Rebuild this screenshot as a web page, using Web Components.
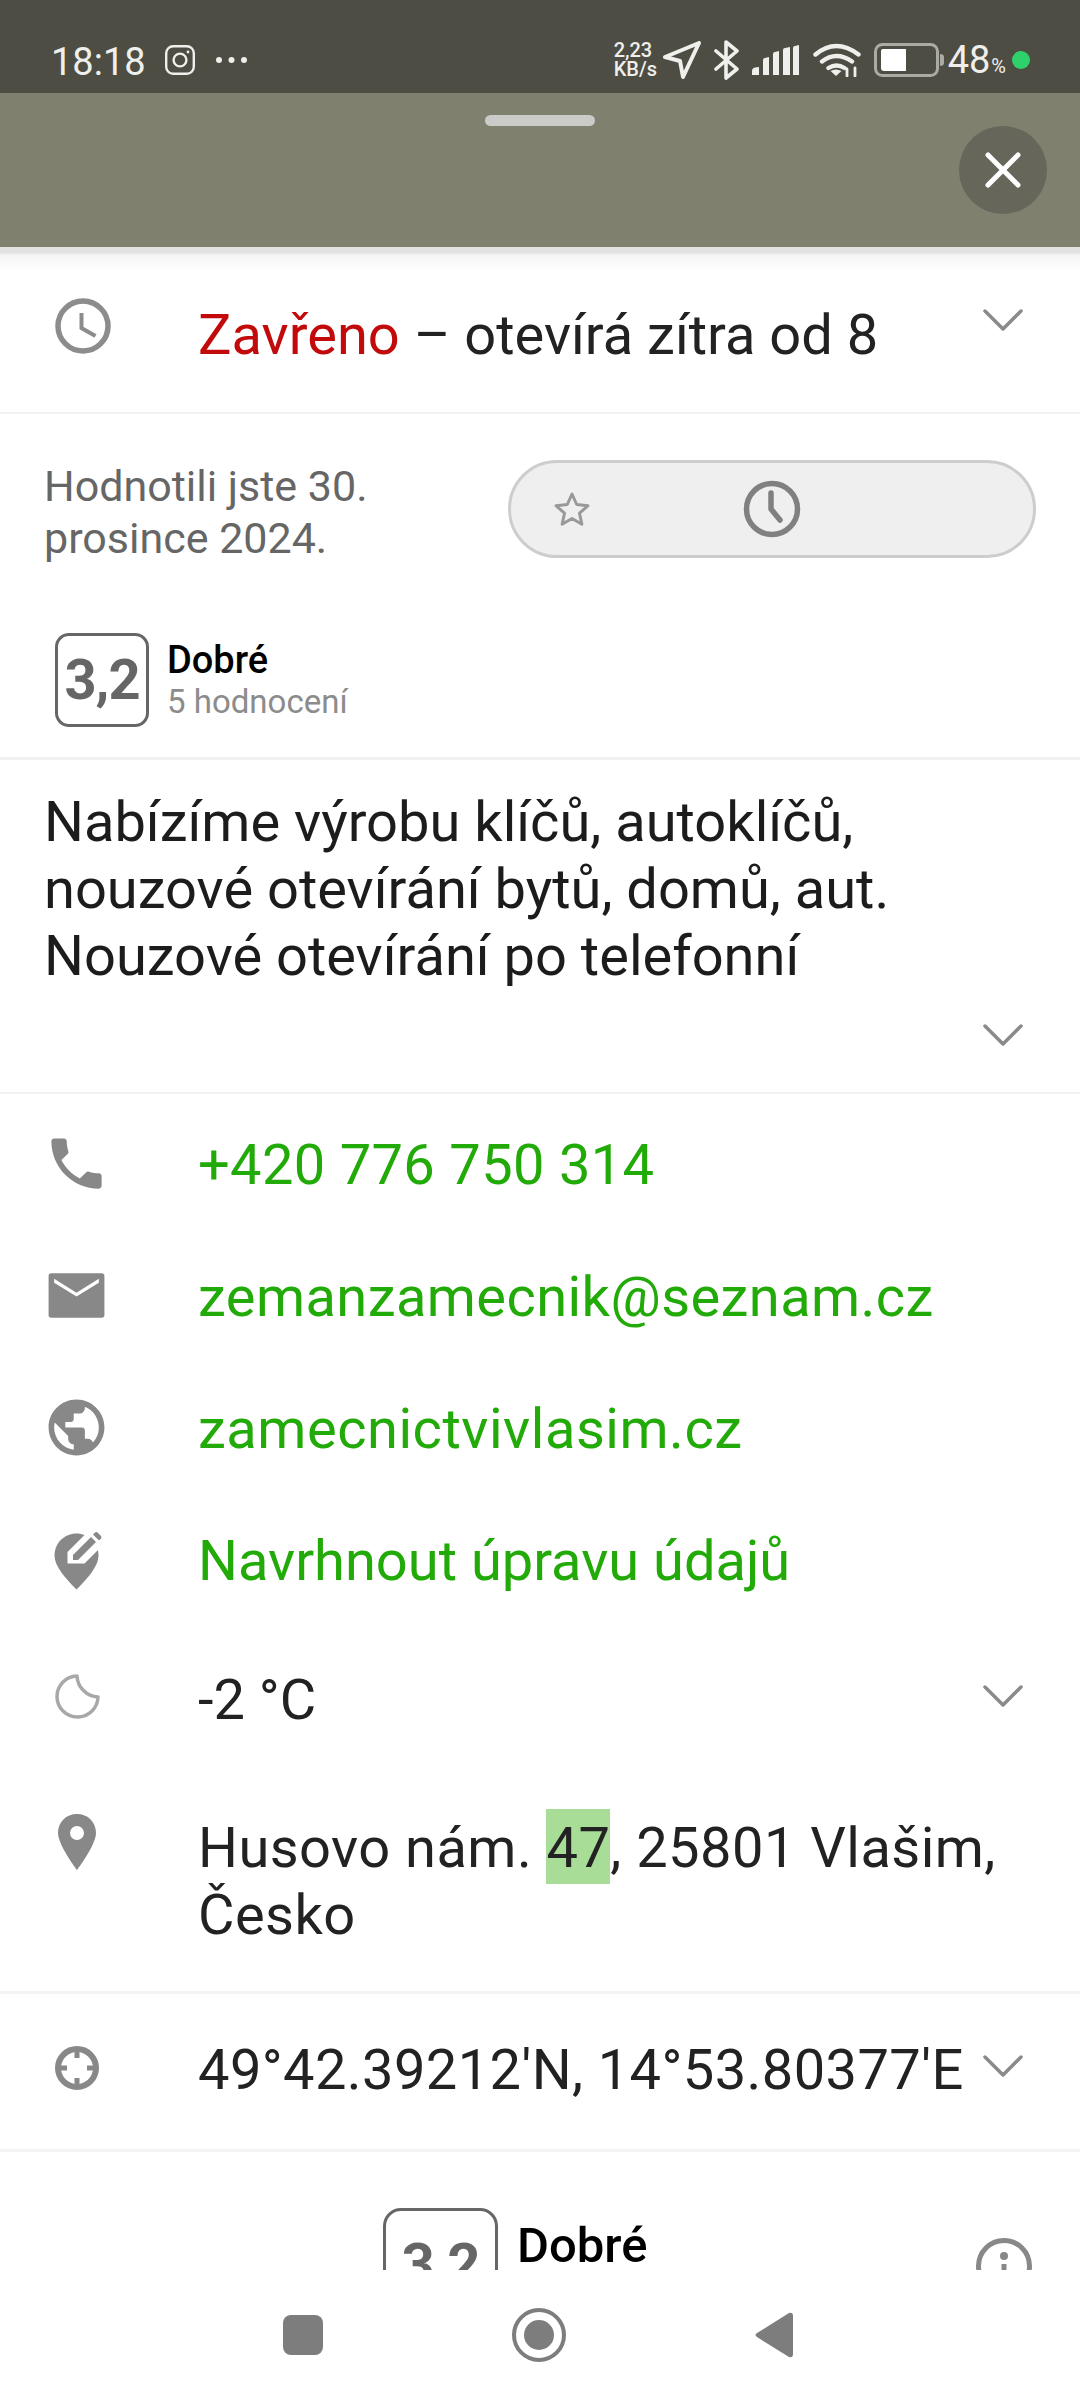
<!DOCTYPE html>
<html lang="cs">
<head>
<meta charset="utf-8">
<title>Detail místa</title>
<style>
  html, body { margin: 0; padding: 0; background: #fff; }
  body { width: 1080px; height: 2400px; overflow: hidden; font-family: Roboto, "Noto Sans", sans-serif; }
  place-screen { height: 2400px; }
</style>
</head>
<body>
<place-screen>
  <status-bar></status-bar>
  <sheet-header></sheet-header>
  <place-sheet>
    <opening-row></opening-row>
    <user-rating></user-rating>
    <rating-summary></rating-summary>
    <place-description>Nabízíme výrobu klíčů, autoklíčů, nouzové otevírání bytů, domů, aut. Nouzové otevírání po telefonní</place-description>
    <contact-list>
      <contact-row icon="phone" spacing=".33px">+420 776 750 314</contact-row>
      <contact-row icon="mail" spacing=".43px">zemanzamecnik@seznam.cz</contact-row>
      <contact-row icon="web" spacing=".53px">zamecnictvivlasim.cz</contact-row>
      <contact-row icon="edit" spacing="0">Navrhnout úpravu údajů</contact-row>
    </contact-list>
    <weather-row></weather-row>
    <address-row></address-row>
    <coords-row></coords-row>
    <rating-footer></rating-footer>
  </place-sheet>
  <nav-bar></nav-bar>
</place-screen>

<script>
const CHEVRON = `<svg width="40" height="24" viewBox="0 0 40 24"><path d="M2 3l18 18L38 3" fill="none" stroke="#8a8a8a" stroke-width="3.5" stroke-linecap="round" stroke-linejoin="round"/></svg>`;

const ICONS = {
  phone: `<svg width="67" height="67" viewBox="0 0 24 24"><path fill="#888" d="M6.62 10.79c1.44 2.83 3.76 5.14 6.59 6.59l2.2-2.2c.27-.27.67-.36 1.02-.24 1.12.37 2.33.57 3.57.57.55 0 1 .45 1 1V20c0 .55-.45 1-1 1-9.39 0-17-7.61-17-17 0-.55.45-1 1-1h3.5c.55 0 1 .45 1 1 0 1.25.2 2.45.57 3.57.11.35.03.74-.25 1.02l-2.2 2.2z"/></svg>`,
  mail: `<svg width="67" height="67" viewBox="0 0 24 24"><path fill="#888" fill-rule="evenodd" d="M3 4h18a1 1 0 0 1 1 1v14a1 1 0 0 1-1 1H3a1 1 0 0 1-1-1V5a1 1 0 0 1 1-1zM4 6v1.400l8 5 8-5V6l-8 5z"/></svg>`,
  web: `<svg width="67" height="67" viewBox="0 0 24 24"><path fill="#888" d="M12 2C6.48 2 2 6.48 2 12s4.48 10 10 10 10-4.48 10-10S17.52 2 12 2zm-1 17.93c-3.95-.49-7-3.85-7-7.93 0-.62.08-1.21.21-1.79L9 15v1c0 1.1.9 2 2 2v1.93zm6.9-2.54c-.26-.81-1-1.39-1.9-1.39h-1v-3c0-.55-.45-1-1-1H8v-2h2c.55 0 1-.45 1-1V7h2c1.1 0 2-.9 2-2v-.41c2.93 1.19 5 4.06 5 7.41 0 2.08-.8 3.97-2.1 5.39z"/></svg>`,
  edit: `<svg width="67" height="67" viewBox="0 0 67 67"><path fill="#888" d="M33.500 7.500C21.500 7.500 11.500 17 11.500 29.500 11.500 40 22 52 33.500 63.500 45 52 55.500 40 55.500 29.500 55.500 17 45.500 7.500 33.500 7.500z"/><path fill="#fff" d="M24.500 37.500V26L45 5.500 60 19 41.500 37.500z"/><path fill="#888" d="M30 34v-5l18-18 5 5-18 18z"/><path fill="#888" d="M50 8.500l2-2q1.300-1 2.600 0l3.400 3.400q1 1.300 0 2.600l-2 2z"/></svg>`
};

// status bar, with the phone's own icons
class StatusBar extends HTMLElement {
  constructor() {
    super();
    this.attachShadow({ mode: 'open' });
    this.shadowRoot.innerHTML = `
      <style>
        :host { display: flex; align-items: center; height: 93px; padding: 26px 0 0 51px; box-sizing: border-box; background: #4d4d43; color: #efefec; }
        .time { font-size: 38px; width: 114px; line-height: 1; padding-top: 5px; }
        svg { display: block; flex: none; }
        .dots { margin-left: 21px; }
        .right { margin-left: auto; display: flex; align-items: center; padding-right: 50px; }
        .speed { font-size: 20px; font-weight: 500; line-height: 19px; width: 49px; text-align: left; }
        .pct { font-size: 38px; margin-left: 3px; line-height: 1; }
        .pct small { font-size: 20px; margin-left: 1px; }
        .dot { width: 18px; height: 18px; border-radius: 50%; background: #2fd26a; margin-left: 6px; }
      </style>
      <span class="time">18:18</span>
      <svg width="30" height="30" viewBox="0 0 30 30" fill="none" stroke="#efefec" stroke-width="2.4"><rect x="1.2" y="1.2" width="27.6" height="27.6" rx="7"/><circle cx="15" cy="15" r="6.4"/><circle cx="23" cy="7" r="1.4" fill="#efefec" stroke="none"/></svg>
      <svg class="dots" width="31" height="8" viewBox="0 0 31 8" fill="#efefec"><circle cx="3" cy="4" r="3"/><circle cx="15.5" cy="4" r="3"/><circle cx="28" cy="4" r="3"/></svg>
      <div class="right">
        <div class="speed">2,23<br>KB/s</div>
        <svg width="38" height="38" viewBox="0 0 38 38" fill="none" stroke="#efefec" stroke-width="4" stroke-linejoin="round" style="margin-right:13px"><path d="M2 16L36 2 20 36l-3-16z"/></svg>
        <svg width="26" height="40" viewBox="0 0 26 40" fill="none" stroke="#efefec" stroke-width="3.6" stroke-linejoin="round" stroke-linecap="round" style="margin-right:12px"><path d="M2 11l21 18-11 9V2l11 9-21 18"/></svg>
        <svg width="48" height="30" viewBox="0 0 48 30" fill="#efefec" style="margin-right:13px"><path d="M0 30v-4q0-3 3-3.500l4-.5v8zM11 30V15q0-2 2-2l4-1v18zM21 30V9q0-2 2-2l4-1v24zM31 30V5q0-2 2-2l5-1v28zM41 30V3q0-2 2-2l4-1v30z"/></svg>
        <svg width="48" height="34" viewBox="0 0 48 34" fill="none" stroke="#efefec" stroke-width="4.4" stroke-linecap="round" style="margin-right:13px"><path d="M2.500 11.500Q23-5.500 45.500 11.500M9 18.500q14-11 30 0M15.500 25q8-5 16 0"/><path d="M23 33l-5.500-5q5.500-3 11 0z" fill="#efefec" stroke="none"/><path d="M34 33v-7M42 33v-8" stroke-width="2.800"/></svg>
        <svg width="71" height="34" viewBox="0 0 71 34"><rect x="1.500" y="1.500" width="62" height="31" rx="7" fill="none" stroke="#aaaba3" stroke-width="3"/><path d="M9 6h23v22H10q-3 0-3-3V8q0-2 2-2z" fill="#fff"/><path d="M66 11q4 0 4 3v6q0 3-4 3z" fill="#aaaba3"/></svg>
        <span class="pct">48<small>%</small></span>
        <span class="dot"></span>
      </div>`;
  }
}

class SheetHeader extends HTMLElement {
  constructor() {
    super();
    this.attachShadow({ mode: 'open' });
    this.shadowRoot.innerHTML = `
      <style>
        :host { display: block; position: relative; height: 154px; background: #7f806e; }
        .handle { position: absolute; left: 485px; top: 22px; width: 110px; height: 11px; border-radius: 6px; background: #cbcbc9; }
        .close { position: absolute; left: 959px; top: 33px; width: 88px; height: 88px; border-radius: 50%; background: #66665a; display: flex; align-items: center; justify-content: center; }
      </style>
      <div class="handle"></div>
      <div class="close"><svg width="36" height="36" viewBox="0 0 36 36" stroke="#fff" stroke-width="5" stroke-linecap="round"><path d="M3 3l30 30M33 3L3 33"/></svg></div>`;
  }
}

class PlaceSheet extends HTMLElement {
  constructor() {
    super();
    this.attachShadow({ mode: 'open' });
    this.shadowRoot.innerHTML = `
      <style>
        :host { display: block; height: 2023px; overflow: hidden; background: #fff; position: relative; color: #222; font-size: 56px; }
        .shade { height: 23px; background: linear-gradient(#e2e2e2 0, #e2e2e2 6px, #e6e7e8 6px, #f4f4f4 8px, #fff 23px); }
      </style>
      <div class="shade"></div>
      <slot></slot>`;
  }
}

class OpeningRow extends HTMLElement {
  constructor() {
    super();
    this.attachShadow({ mode: 'open' });
    this.shadowRoot.innerHTML = `
      <style>
        :host { display: flex; height: 144px; box-sizing: border-box; border-bottom: 2px solid #f1f1f1; }
        .ico { width: 198px; flex: none; padding: 28px 0 0 55px; box-sizing: border-box; }
        .txt { padding-top: 32px; line-height: 66px; flex: 1; white-space: nowrap; }
        b { font-weight: 400; color: #c20a0a; }
        .chev { padding: 38px 57px 0 0; }
        svg { display: block; }
      </style>
      <div class="ico"><svg width="56" height="56" viewBox="0 0 56 56" fill="none"><circle cx="28" cy="28" r="25" stroke="#8c8c8c" stroke-width="5.500"/><path d="M26.500 15v15l14 8" stroke="#8c8c8c" stroke-width="4"/></svg></div>
      <div class="txt"><b>Zavřeno</b> – otevírá zítra od 8</div>
      <div class="chev">${CHEVRON}</div>`;
  }
}

class UserRating extends HTMLElement {
  constructor() {
    super();
    this.attachShadow({ mode: 'open' });
    this.shadowRoot.innerHTML = `
      <style>
        :host { display: flex; padding: 46px 44px 0 44px; height: 219px; box-sizing: border-box; color: #666; font-size: 43px; line-height: 52px; }
        .label { width: 464px; flex: none; }
        .pill { width: 528px; height: 98px; box-sizing: border-box; border: 3px solid #cdcdcd; border-radius: 49px; background: #efefef; display: flex; align-items: center; padding-left: 43px; }
        svg { display: block; }
      </style>
      <div class="label">Hodnotili jste 30.<br>prosince 2024.</div>
      <div class="pill">
        <svg width="36" height="34" viewBox="0 0 36 34" fill="none" stroke="#999" stroke-width="3" stroke-linejoin="round"><path d="M18 2l4.700 10.500 11.300 1.200-8.500 7.500 2.400 11L18 26.500 8.100 32.200l2.400-11L2 13.700l11.300-1.200z"/></svg>
        <svg width="58" height="58" viewBox="0 0 58 58" fill="none" stroke="#808080" stroke-width="5.500" stroke-linecap="round" stroke-linejoin="round" style="margin-left:153px"><circle cx="29" cy="29" r="25.500"/><path d="M28 13v16l9 11"/></svg>
      </div>`;
  }
}

class RatingSummary extends HTMLElement {
  constructor() {
    super();
    this.attachShadow({ mode: 'open' });
    this.shadowRoot.innerHTML = `
      <style>
        :host { display: flex; height: 127px; box-sizing: border-box; padding-left: 55px; border-bottom: 3px solid #f1f1f1; }
        .box { width: 94px; height: 94px; box-sizing: border-box; border: 3px solid #666; border-radius: 14px; color: #666; font-weight: 700; font-size: 56px; display: flex; align-items: center; justify-content: center; letter-spacing: -1px; }
        .txt { margin-left: 18px; padding-top: 6px; }
        .name { font-size: 38px; font-weight: 500; color: #000; line-height: 42px; }
        .count { font-size: 33px; color: #8c8c8c; line-height: 42px; }
      </style>
      <div class="box">3,2</div>
      <div class="txt"><div class="name">Dobré</div><div class="count">5 hodnocení</div></div>`;
  }
}

class PlaceDescription extends HTMLElement {
  constructor() {
    super();
    this.attachShadow({ mode: 'open' });
    this.shadowRoot.innerHTML = `
      <style>
        :host { display: block; height: 334px; box-sizing: border-box; padding: 29px 60px 0 44px; border-bottom: 2px solid #f1f1f1; line-height: 67px; color: #1c1c1c; }
        .chev { display: flex; justify-content: flex-end; margin: 33px -3px 0 0; }
        svg { display: block; }
      </style>
      <slot></slot>
      <div class="chev">${CHEVRON}</div>`;
  }
}

class ContactList extends HTMLElement {
  constructor() {
    super();
    this.attachShadow({ mode: 'open' });
    this.shadowRoot.innerHTML = `
      <style>:host { display: block; padding-top: 5px; }</style>
      <slot></slot>`;
  }
}

class ContactRow extends HTMLElement {
  constructor() {
    super();
    const name = this.getAttribute('icon');
    this.attachShadow({ mode: 'open' });
    this.shadowRoot.innerHTML = `
      <style>
        :host { display: flex; align-items: center; height: 132px; color: #22aa08; white-space: nowrap; letter-spacing: ${this.getAttribute('spacing')}; }
        .ico { width: 198px; flex: none; padding-left: 43px; box-sizing: border-box; margin-top: -4px; }
        svg { display: block; }
      </style>
      <div class="ico">${ICONS[name]}</div>
      <div><slot></slot></div>`;
  }
}

class WeatherRow extends HTMLElement {
  constructor() {
    super();
    this.attachShadow({ mode: 'open' });
    this.shadowRoot.innerHTML = `
      <style>
        :host { display: flex; height: 183px; box-sizing: border-box; padding-top: 30px; }
        .ico { width: 198px; flex: none; padding: 16px 0 0 55px; box-sizing: border-box; }
        .txt { flex: 1; line-height: 66px; padding-top: 10px; }
        .chev { padding: 27px 57px 0 0; }
        svg { display: block; }
      </style>
      <div class="ico"><svg width="46" height="46" viewBox="0 0 46 46" fill="none" stroke="#a8a8a8" stroke-width="3.500" stroke-linejoin="round"><path d="M22 3A20.500 20.500 0 1 0 43 24 22 22 0 0 1 22 3z"/></svg></div>
      <div class="txt">-2 °C</div>
      <div class="chev">${CHEVRON}</div>`;
  }
}

class AddressRow extends HTMLElement {
  constructor() {
    super();
    this.attachShadow({ mode: 'open' });
    this.shadowRoot.innerHTML = `
      <style>
        :host { display: flex; height: 184px; box-sizing: border-box; border-bottom: 3px solid #f3f3f3; }
        .ico { width: 198px; flex: none; padding: 4px 0 0 57px; box-sizing: border-box; }
        .txt { line-height: 67px; margin-top: 5px; letter-spacing: .46px; }
        mark { background: #a8dd98; color: inherit; padding: 6px 0 3px; }
        svg { display: block; }
      </style>
      <div class="ico"><svg width="40" height="56" viewBox="0 0 40 56"><path fill-rule="evenodd" fill="#888" d="M20 0C9 0 1 8 1 19c0 12 19 37 19 37s19-25 19-37C39 8 31 0 20 0zm0 12a7 7 0 1 1 0 14 7 7 0 0 1 0-14z"/></svg></div>
      <div class="txt">Husovo nám. <mark>47</mark>, 25801 Vlašim,<br>Česko</div>`;
  }
}

class CoordsRow extends HTMLElement {
  constructor() {
    super();
    this.attachShadow({ mode: 'open' });
    this.shadowRoot.innerHTML = `
      <style>
        :host { display: flex; height: 158px; box-sizing: border-box; border-bottom: 3px solid #f3f3f3; white-space: nowrap; }
        .ico { width: 198px; flex: none; padding: 52px 0 0 55px; box-sizing: border-box; }
        .txt { flex: 1; line-height: 66px; padding-top: 43px; letter-spacing: .41px; }
        .chev { padding: 60px 57px 0 0; }
        svg { display: block; }
      </style>
      <div class="ico"><svg width="44" height="44" viewBox="0 0 44 44" fill="none" stroke="#888" stroke-width="6"><circle cx="22" cy="22" r="19"/><path d="M22 3v9M22 32v9M3 22h9M32 22h9" stroke-width="5"/></svg></div>
      <div class="txt">49°42.39212'N, 14°53.80377'E</div>
      <div class="chev">${CHEVRON}</div>`;
  }
}

class RatingFooter extends HTMLElement {
  constructor() {
    super();
    this.attachShadow({ mode: 'open' });
    this.shadowRoot.innerHTML = `
      <style>
        :host { display: flex; padding: 56px 0 0 383px; height: 200px; box-sizing: border-box; }
        .box { width: 115px; height: 115px; box-sizing: border-box; border: 3px solid #666; border-radius: 18px; color: #666; font-weight: 700; font-size: 58px; display: flex; align-items: center; justify-content: center; letter-spacing: -1px; flex: none; padding-bottom: 4px; }
        .name { margin-left: 19px; font-size: 49px; font-weight: 500; color: #000; line-height: 54px; padding-top: 11px; }
        .info { margin-left: 329px; margin-top: 30px; }
        svg { display: block; }
      </style>
      <div class="box">3,2</div>
      <div class="name">Dobré</div>
      <div class="info"><svg width="56" height="56" viewBox="0 0 56 56" fill="none" stroke="#888" stroke-width="5"><circle cx="28" cy="28" r="25.500"/><circle cx="28" cy="18" r="4" fill="#888" stroke="none"/><path d="M28 26v16"/></svg></div>`;
  }
}

class NavBar extends HTMLElement {
  constructor() {
    super();
    this.attachShadow({ mode: 'open' });
    this.shadowRoot.innerHTML = `
      <style>
        :host { display: flex; align-items: center; height: 130px; padding-left: 283px; box-sizing: border-box; background: #fff; }
        svg { display: block; flex: none; }
      </style>
      <svg width="40" height="40" viewBox="0 0 40 40" fill="#7d7d7d"><rect width="40" height="40" rx="8"/></svg>
      <svg width="54" height="54" viewBox="0 0 54 54" style="margin-left:189px"><circle cx="27" cy="27" r="25" fill="none" stroke="#7d7d7d" stroke-width="4"/><circle cx="27" cy="27" r="15" fill="#7d7d7d"/></svg>
      <svg width="38" height="46" viewBox="0 0 38 46" fill="#7d7d7d" style="margin-left:189px"><path d="M34 1q4-1 4 3v38q0 4-4 3L2 25q-3-2 0-4z"/></svg>`;
  }
}

class PlaceScreen extends HTMLElement {
  constructor() {
    super();
    this.attachShadow({ mode: 'open' });
    this.shadowRoot.innerHTML = `
      <style>:host { display: flex; flex-direction: column; width: 1080px; }</style>
      <slot></slot>`;
  }
}

customElements.define('status-bar', StatusBar);
customElements.define('sheet-header', SheetHeader);
customElements.define('place-sheet', PlaceSheet);
customElements.define('opening-row', OpeningRow);
customElements.define('user-rating', UserRating);
customElements.define('rating-summary', RatingSummary);
customElements.define('place-description', PlaceDescription);
customElements.define('contact-list', ContactList);
customElements.define('contact-row', ContactRow);
customElements.define('weather-row', WeatherRow);
customElements.define('address-row', AddressRow);
customElements.define('coords-row', CoordsRow);
customElements.define('rating-footer', RatingFooter);
customElements.define('nav-bar', NavBar);
customElements.define('place-screen', PlaceScreen);
</script>
</body>
</html>
